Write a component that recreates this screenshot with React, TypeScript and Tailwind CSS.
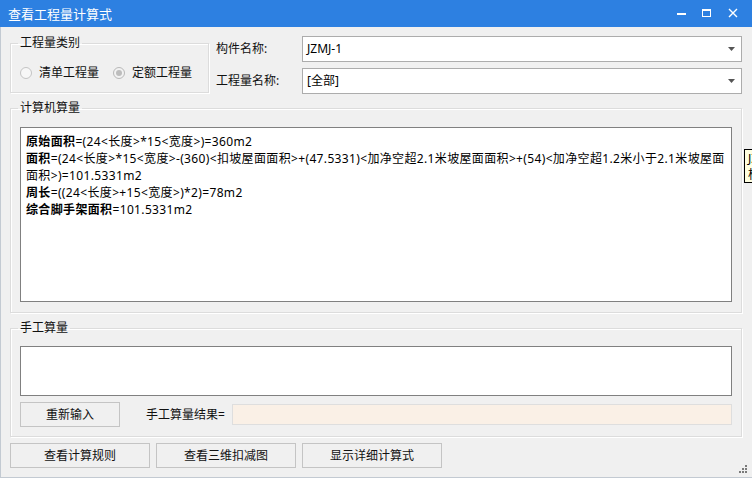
import React from 'react'

const FONT = '[font-family:"Noto_Sans","Noto_Sans_CJK_SC",sans-serif]'

function Radio({ label, checked }: { label: string; checked?: boolean }) {
  return (
    <div className="flex items-center gap-[7px]">
      <div
        className={`w-[12px] h-[12px] rounded-full border flex items-center justify-center ${
          checked ? 'border-[#b8b8b8] bg-[#f2f2f2]' : 'border-[#c4c4c4] bg-[#f7f7f7]'
        }`}
      >
        {checked && <div className="w-[6px] h-[6px] rounded-full bg-[#bdbdbd]" />}
      </div>
      <span className="text-[12px] leading-[16px] text-[#111] w-[60px]">{label}</span>
    </div>
  )
}

function Combo({ value }: { value: string }) {
  return (
    <div className="w-[440px] h-[26px] bg-white border border-[#acacac] flex items-center justify-between pl-[4px] pr-[6px]">
      <span className="text-[12px] text-black">{value}</span>
      <svg width="7" height="4" viewBox="0 0 7 4">
        <path d="M0 0 H7 L3.5 4 Z" fill="#555" />
      </svg>
    </div>
  )
}

function Group({ title, className, children }: { title: string; className: string; children: React.ReactNode }) {
  return (
    <fieldset
      className={`border border-[#dcdcdc] shadow-[inset_1px_1px_0_#ffffff,1px_1px_0_#ffffff] ${className}`}
    >
      <legend className="ml-[7px] px-[2px] text-[12px] leading-[16px] text-[#111]">{title}</legend>
      {children}
    </fieldset>
  )
}

function Btn({ label, w }: { label: string; w: string }) {
  return (
    <div className={`${w} h-[25px] border border-[#c4c4c4] bg-[#f0f0f0] flex items-center justify-center text-[12px] text-[#111]`}>
      {label}
    </div>
  )
}

const B = ({ children }: { children: React.ReactNode }) => <b className="font-bold">{children}</b>

export default function App() {
  return (
    <div className={`relative w-[752px] h-[478px] overflow-hidden bg-[#f0f0f0] ${FONT}`}>
      {/* title bar */}
      <div className="h-[27px] bg-[#2d80e1] flex items-center justify-between pl-[8px] text-white">
        <span className="text-[13px] leading-[16px]">查看工程量计算式</span>
        <div className="flex items-center">
          <svg width="28" height="27" viewBox="0 0 28 27">
            <rect x="9" y="13" width="9" height="2" fill="#fff" />
          </svg>
          <svg width="28" height="27" viewBox="0 0 28 27">
            <rect x="6.5" y="9.5" width="8" height="7" fill="none" stroke="#fff" />
            <rect x="6.5" y="9.5" width="8" height="1.5" fill="#fff" />
          </svg>
          <svg width="28" height="27" viewBox="0 0 28 27">
            <path d="M5 9 L13 17 M13 9 L5 17" stroke="#fff" strokeWidth="1.4" />
          </svg>
        </div>
      </div>

      <div className="h-[451px] border-l border-b border-[#c3cad2] flex flex-col">
        {/* top area */}
        <div className="flex">
          <Group title="工程量类别" className="ml-[9px] mt-[8px] w-[199px] h-[58px]">
            <div className="flex items-center gap-[14px] pl-[9px] pt-[14px]">
              <Radio label="清单工程量" />
              <Radio label="定额工程量" checked />
            </div>
          </Group>
          <div className="ml-[7px] mt-[9px] flex flex-col gap-[6px]">
            <div className="flex items-center">
              <span className="w-[86px] text-[12px] text-[#111]">构件名称:</span>
              <Combo value="JZMJ-1" />
            </div>
            <div className="flex items-center">
              <span className="w-[86px] text-[12px] text-[#111]">工程量名称:</span>
              <Combo value="[全部]" />
            </div>
          </div>
        </div>

        {/* computer calc */}
        <Group title="计算机算量" className="ml-[9px] mt-[6px] w-[732px] h-[213px]">
          <div className="px-[9px] pt-[11px]">
            <div className="h-[175px] bg-white border border-[#808080] pl-[5px] pt-[5px] text-[12px] leading-[17px] tracking-[0.35px] text-black whitespace-nowrap overflow-hidden">
              <div><B>原始面积</B>=(24&lt;长度&gt;*15&lt;宽度&gt;)=360m2</div>
              <div>
                <B>面积</B>=(24&lt;长度&gt;*15&lt;宽度&gt;-(360)&lt;扣坡屋面面积&gt;+(47.5331)&lt;加净空超2.1米坡屋面面积&gt;+(54)&lt;加净空超1.2米小于2.1米坡屋面
              </div>
              <div>面积&gt;)=101.5331m2</div>
              <div><B>周长</B>=((24&lt;长度&gt;+15&lt;宽度&gt;)*2)=78m2</div>
              <div><B>综合脚手架面积</B>=101.5331m2</div>
            </div>
          </div>
        </Group>

        {/* manual calc */}
        <Group title="手工算量" className="ml-[9px] mt-[7px] w-[732px] h-[117px]">
          <div className="px-[9px] pt-[10px] flex flex-col">
            <div className="h-[50px] bg-white border border-[#808080]" />
            <div className="mt-[6px] flex items-center">
              <Btn label="重新输入" w="w-[100px]" />
              <span className="ml-[26px] w-[86px] text-[12px] text-[#111]">手工算量结果=</span>
              <div className="w-[500px] h-[21px] bg-[#faf0e6] border border-[#dedede]" />
            </div>
          </div>
        </Group>

        {/* bottom buttons */}
        <div className="ml-[9px] mt-[6px] flex gap-[6px]">
          <Btn label="查看计算规则" w="w-[140px]" />
          <Btn label="查看三维扣减图" w="w-[140px]" />
          <Btn label="显示详细计算式" w="w-[140px]" />
        </div>
      </div>

      {/* resize grip */}
      <svg className="absolute right-[4px] bottom-[4px]" width="9" height="9" viewBox="0 0 9 9">
        <rect x="6" y="0" width="2" height="2" fill="#7a7a7a" />
        <rect x="3" y="3" width="2" height="2" fill="#7a7a7a" />
        <rect x="6" y="3" width="2" height="2" fill="#7a7a7a" />
        <rect x="0" y="6" width="2" height="2" fill="#7a7a7a" />
        <rect x="3" y="6" width="2" height="2" fill="#7a7a7a" />
        <rect x="6" y="6" width="2" height="2" fill="#7a7a7a" />
      </svg>

      {/* tooltip */}
      <div className="absolute left-[744px] top-[149px] w-[80px] h-[34px] bg-[#ffffe1] border border-black px-[3px] pt-[1px] text-[12px] leading-[16px] text-black whitespace-nowrap">
        <div>JZMJ-1</div>
        <div>构件名称</div>
      </div>
    </div>
  )
}
